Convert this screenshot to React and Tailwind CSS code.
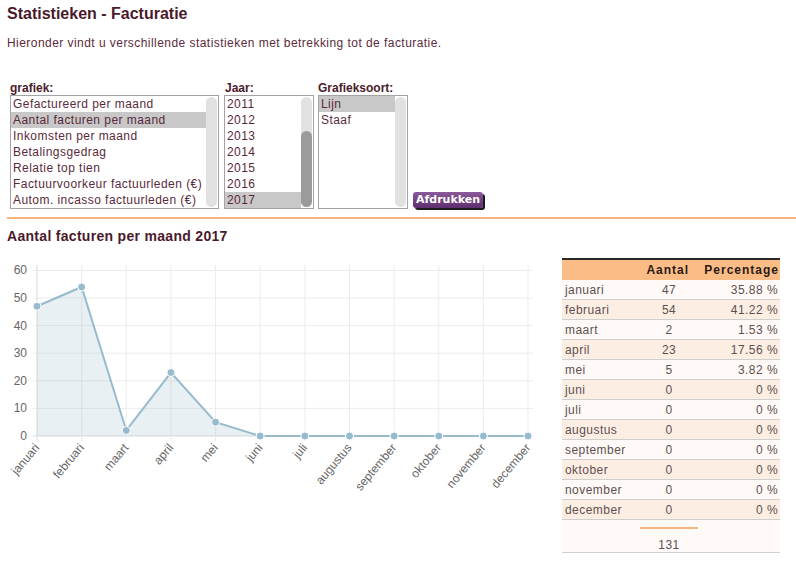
import React from 'react'

const FONT = { fontFamily: '"Century Gothic", "Liberation Sans", sans-serif' }

const grafieken = [
  'Gefactureerd per maand',
  'Aantal facturen per maand',
  'Inkomsten per maand',
  'Betalingsgedrag',
  'Relatie top tien',
  'Factuurvoorkeur factuurleden (€)',
  'Autom. incasso factuurleden (€)',
]
const jaren = ['2011', '2012', '2013', '2014', '2015', '2016', '2017']
const soorten = ['Lijn', 'Staaf']

const maanden = [
  ['januari', 47, '35.88 %'],
  ['februari', 54, '41.22 %'],
  ['maart', 2, '1.53 %'],
  ['april', 23, '17.56 %'],
  ['mei', 5, '3.82 %'],
  ['juni', 0, '0 %'],
  ['juli', 0, '0 %'],
  ['augustus', 0, '0 %'],
  ['september', 0, '0 %'],
  ['oktober', 0, '0 %'],
  ['november', 0, '0 %'],
  ['december', 0, '0 %'],
]

/**
 * Fake listbox with a rounded scrollbar track
 */
function ListBox({ items, selected, width, thumb }) {
  return (
    <div className={`flex border border-[#a3a3a3] bg-white ${width}`}>
      <div className="flex-1">
        {items.map((item, i) => (
          <div
            key={item}
            className={`h-4 pl-[2px] text-[12px] leading-4 tracking-[0.45px] text-[#5a2a3a] whitespace-nowrap ${
              i === selected ? 'bg-[#c8c8c8]' : ''
            }`}
          >
            {item}
          </div>
        ))}
      </div>
      <div className="w-[11px] my-[1px] mr-[1px] rounded-full bg-[#e1e1e1] flex flex-col">
        {thumb && <div className="mt-[34px] flex-1 rounded-full bg-[#9b9b9b]" />}
      </div>
    </div>
  )
}

function Chart() {
  const x0 = 37
  const step = 44.64
  const yOf = (v) => 436 - v * 2.76
  const pts = maanden.map((m, i) => [x0 + i * step, yOf(m[1])])
  const line = pts.map((p) => p.join(',')).join(' ')
  const area = `${x0},436 ${line} ${pts[11][0]},436`
  return (
    <svg width="549" height="245" className="shrink-0">
      <g transform="translate(-7,-258)">
        {[0, 1, 2, 3, 4, 5, 6].map((k) => (
          <g key={k}>
            <line x1="33" x2="533" y1={yOf(k * 10)} y2={yOf(k * 10)} stroke={k === 0 ? '#d9d9d9' : '#ececec'} />
            <text
              x="27"
              y={yOf(k * 10) + 4}
              textAnchor="end"
              fontSize="12"
              fill="#666"
              fontFamily="Liberation Sans, sans-serif"
            >
              {k * 10}
            </text>
          </g>
        ))}
        {pts.map((p, i) => (
          <line key={i} x1={p[0]} x2={p[0]} y1="265" y2="441" stroke={i === 0 ? '#d9d9d9' : '#ececec'} />
        ))}
        <polygon points={area} fill="rgba(151,187,205,0.22)" />
        <polyline points={line} fill="none" stroke="#97bbcd" strokeWidth="2" />
        {pts.map((p, i) => (
          <circle key={i} cx={p[0]} cy={p[1]} r="4" fill="#97bbcd" stroke="#fff" strokeWidth="1" />
        ))}
        {maanden.map((m, i) => (
          <text
            key={m[0]}
            x={pts[i][0] + 3}
            y="448"
            textAnchor="end"
            fontSize="12"
            fill="#666"
            fontFamily="Liberation Sans, sans-serif"
            transform={`rotate(-50 ${pts[i][0] + 3} 448)`}
          >
            {m[0]}
          </text>
        ))}
      </g>
    </svg>
  )
}

function Tabel() {
  return (
    <div className="w-[218px] ml-[6px] text-[12px] tracking-[0.45px] text-[#5e5050]">
      <div className="flex h-[22px] items-center border-t-2 border-[#2a2a2a] bg-[#fbbd85] font-bold tracking-[1px] text-[#2a1a1a]">
        <div className="w-[70px]" />
        <div className="w-[74px] text-center">Aantal</div>
        <div className="flex-1 text-right pr-[1px]">Percentage</div>
      </div>
      {maanden.map((m, i) => (
        <div
          key={m[0]}
          className={`flex h-5 items-center border-b border-[#cfcfcf] ${
            i % 2 === 0 ? 'bg-[#fffaf7]' : 'bg-[#fdeee4]'
          }`}
        >
          <div className="w-[78px] pl-[3px]">{m[0]}</div>
          <div className="w-[58px] text-center">{m[1]}</div>
          <div className="flex-1 text-right pr-[2px]">{m[2]}</div>
        </div>
      ))}
      <div className="flex h-[33px] border-b border-[#cfcfcf] bg-[#fffaf7]">
        <div className="w-[78px]" />
        <div className="w-[58px] flex flex-col items-center">
          <div className="mt-[7px] w-full border-t-2 border-[#f6b57f]" />
          <div className="mt-[8px] leading-4">131</div>
        </div>
      </div>
    </div>
  )
}

export default function App() {
  return (
    <div className="min-h-[565px] bg-white pl-[7px] text-[#4a1c2c]" style={FONT}>
      <div className="pt-[4px] text-[16px] leading-5 font-bold text-[#4a1a2c]">Statistieken - Facturatie</div>
      <div className="mt-[11px] text-[12px] leading-4 tracking-[0.45px] text-[#5c2a3c]">
        Hieronder vindt u verschillende statistieken met betrekking tot de facturatie.
      </div>

      <div className="mt-[30px] flex items-end pl-[3px]">
        <div>
          <div className="text-[12px] leading-[14px] font-bold">grafiek:</div>
          <ListBox items={grafieken} selected={1} width="w-[209px]" />
        </div>
        <div className="ml-[5px]">
          <div className="text-[12px] leading-[14px] font-bold pl-[1px]">Jaar:</div>
          <ListBox items={jaren} selected={6} width="w-[90px]" thumb />
        </div>
        <div className="ml-[4px]">
          <div className="text-[12px] leading-[14px] font-bold">Grafieksoort:</div>
          <div className="h-[114px]">
            <ListBox items={soorten} selected={0} width="w-[90px] h-[114px]" />
          </div>
        </div>
        <button
          className="ml-[5px] mb-[1px] h-4 w-[70px] rounded-[3px] bg-gradient-to-b from-[#8a5a9a] to-[#5e2d6e] text-[11px] leading-4 font-bold text-white shadow-[2px_2px_0_#1a1a1a]"
          style={{ fontFamily: '"DejaVu Sans", sans-serif' }}
        >
          Afdrukken
        </button>
      </div>

      <div className="mt-[8px] h-[2px] bg-[#f6b57f]" />

      <div className="mt-[8px] text-[14px] leading-[18px] font-bold tracking-[0.3px] text-[#4a1a2c]">
        Aantal facturen per maand 2017
      </div>

      <div className="mt-[13px] flex">
        <Chart />
        <Tabel />
      </div>
    </div>
  )
}
